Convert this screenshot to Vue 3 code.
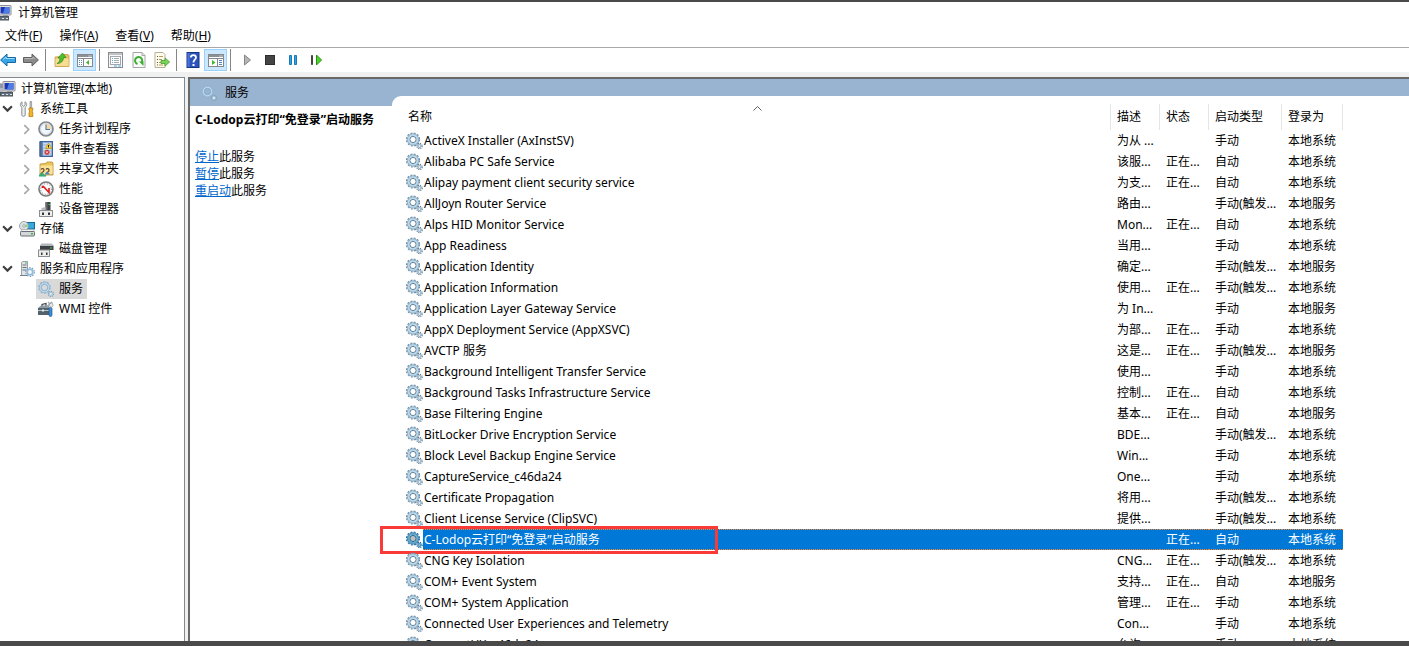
<script setup>
import { ref } from 'vue'

const selected = ref('C-Lodop云打印“免登录”启动服务')

const menus = [
  { label: '文件', key: 'F' },
  { label: '操作', key: 'A' },
  { label: '查看', key: 'V' },
  { label: '帮助', key: 'H' },
]

const toolGroups = [
  [{ icon: 'back', title: '后退' }, { icon: 'forward', title: '前进' }],
  [{ icon: 'up', title: '上一级' }, { icon: 'tree', title: '显示/隐藏控制台树', on: true }],
  [{ icon: 'props', title: '属性' }, { icon: 'refresh', title: '刷新' }, { icon: 'export', title: '导出列表' }],
  [{ icon: 'help', title: '帮助' }, { icon: 'action', title: '显示/隐藏操作窗格', on: true }],
  [{ icon: 'play', title: '启动服务' }, { icon: 'stop', title: '停止服务' }, { icon: 'pause', title: '暂停服务' }, { icon: 'restart', title: '重启动服务' }],
]

const tree = [
  { level: 0, icon: 'computer', label: '计算机管理(本地)' },
  { level: 1, icon: 'tools', label: '系统工具', caret: 'open' },
  { level: 2, icon: 'clock', label: '任务计划程序', caret: 'closed' },
  { level: 2, icon: 'events', label: '事件查看器', caret: 'closed' },
  { level: 2, icon: 'shared', label: '共享文件夹', caret: 'closed' },
  { level: 2, icon: 'perf', label: '性能', caret: 'closed' },
  { level: 2, icon: 'device', label: '设备管理器' },
  { level: 1, icon: 'storage', label: '存储', caret: 'open' },
  { level: 2, icon: 'disk', label: '磁盘管理' },
  { level: 1, icon: 'apps', label: '服务和应用程序', caret: 'open' },
  { level: 2, icon: 'gearsoft', label: '服务', active: true },
  { level: 2, icon: 'wmi', label: 'WMI 控件' },
]

const columns = ['名称', '描述', '状态', '启动类型', '登录为']

const R = '正在...'
const M = '手动'
const A = '自动'
const T = '手动(触发...'
const S = '本地系统'
const L = '本地服务'
const services = [
  ['ActiveX Installer (AxInstSV)', '为从 ...', '', M, S],
  ['Alibaba PC Safe Service', '该服...', R, A, S],
  ['Alipay payment client security service', '为支...', R, A, S],
  ['AllJoyn Router Service', '路由...', '', T, L],
  ['Alps HID Monitor Service', 'Mon...', R, A, S],
  ['App Readiness', '当用...', '', M, S],
  ['Application Identity', '确定...', '', T, L],
  ['Application Information', '使用...', R, T, S],
  ['Application Layer Gateway Service', '为 In...', '', M, L],
  ['AppX Deployment Service (AppXSVC)', '为部...', R, M, S],
  ['AVCTP 服务', '这是...', R, T, L],
  ['Background Intelligent Transfer Service', '使用...', '', M, S],
  ['Background Tasks Infrastructure Service', '控制...', R, A, S],
  ['Base Filtering Engine', '基本...', R, A, L],
  ['BitLocker Drive Encryption Service', 'BDE...', '', T, S],
  ['Block Level Backup Engine Service', 'Win...', '', M, S],
  ['CaptureService_c46da24', 'One...', '', M, S],
  ['Certificate Propagation', '将用...', '', T, S],
  ['Client License Service (ClipSVC)', '提供...', '', T, S],
  ['C-Lodop云打印“免登录”启动服务', '', R, A, S],
  ['CNG Key Isolation', 'CNG...', R, T, S],
  ['COM+ Event System', '支持...', R, A, L],
  ['COM+ System Application', '管理...', R, M, S],
  ['Connected User Experiences and Telemetry', 'Con...', '', M, S],
  ['ConsentUX_c46da24', '允许...', '', M, S],
]
</script>

<template>
  <div class="window">
    <svg class="defs" aria-hidden="true">
      <symbol id="i-computer" viewBox="0 0 16 16">
        <rect x="3" y="0.5" width="12" height="9.5" rx="0.5" fill="#e4e4dc" stroke="#8d8f96" />
        <rect x="4.5" y="2" width="9" height="6.5" fill="#1c36b4" />
        <path d="M9 2h4.500v6.500H7z" fill="#4f7be6" />
        <path d="M0 2h3v9H0z" fill="#b4b8c2" /><path d="M0 4h3M0 6h3" stroke="#6d7484" />
        <path d="M7 10h5v2H7z" fill="#989ca2" />
        <rect x="0.500" y="11.500" width="12" height="3.500" fill="#66727c" stroke="#4a555e" />
        <path d="M2 13.500h2M6 13.500h2M10 13.500h2" stroke="#dbe4ea" />
      </symbol>
      <symbol id="i-tools" viewBox="0 0 16 16">
        <path d="M3 .8v3l1.500 1.700L6 3.800v-3c2 1 2.300 4 .2 5.500V14c0 1.800-3.400 1.800-3.400 0V6.300C.8 5 1 2 3 .8z" fill="#eceef0" stroke="#7f8489" stroke-width=".9" />
        <path d="M11 0.500h1.600v6H11z" fill="#ccc" stroke="#777" stroke-width=".6" />
        <path d="M10 7h3.800v2l-.7 1 .7 2v3.500H10V12l.7-2-.7-1z" fill="#f5b529" stroke="#b87b13" stroke-width=".8" />
      </symbol>
      <symbol id="i-clock" viewBox="0 0 16 16">
        <circle cx="8" cy="8" r="7" fill="#f3f6fa" stroke="#85898d" stroke-width="1.700" />
        <path d="M8 8V3a5 5 0 0 1 5 5z" fill="#f5d79a" />
        <circle cx="8" cy="8" r="5.500" fill="none" stroke="#bcc9d8" stroke-width=".7" />
        <path d="M8 3.500v5h4" fill="none" stroke="#4a78ad" stroke-width="1.100" />
      </symbol>
      <symbol id="i-events" viewBox="0 0 16 16">
        <rect x="2" y="0.500" width="12.500" height="15" fill="#5f8bc9" stroke="#3d639a" />
        <path d="M5 1.500h8.500v13H5z" fill="#c8d8ee" /><path d="M5 4h8M5 7h8M5 10h8M5 13h8" stroke="#8da9cf" stroke-width=".7" />
        <path d="M1 2h3M1 4h3M1 6h3M1 8h3M1 10h3M1 12h3M1 14h3" stroke="#4d5a6c" stroke-width=".9" />
        <path d="M10.500 2l3 5.500h-6z" fill="#ffd62b" stroke="#b58b00" stroke-width=".6" />
        <path d="M10.500 4v2.500" stroke="#222" /><circle cx="9" cy="11.300" r="2.500" fill="#d5352f" /><path d="M8 10.300l2 2M10 10.300l-2 2" stroke="#fff" stroke-width=".8" />
      </symbol>
      <symbol id="i-shared" viewBox="0 0 16 16">
        <path d="M2 3l6-.5 1-1.500h5l1 1v12H2z" fill="#ecc65b" stroke="#b78c2f" stroke-width=".8" />
        <path d="M2.500 4.500h12V13h-12z" fill="#fae298" />
        <path d="M3 8.500c1-1.500 3-1 3 .7S4.500 11 3.500 11.700M8 8.500c1-1.500 3-1 3 .7S9.500 11 8.500 11.700" fill="none" stroke="#6a4b32" stroke-width="1.300" />
        <path d="M1.500 14c0-3 4.500-3 4.500 0z" fill="#3ea873" /><path d="M7 13.500c0-3 4.500-3 4.500 0z" fill="#438dd0" />
        <path d="M1 14.800h7" stroke="#2cab6c" stroke-width="1.500" />
      </symbol>
      <symbol id="i-perf" viewBox="0 0 16 16">
        <circle cx="8" cy="8" r="7" fill="#fcfcfc" stroke="#77797b" stroke-width="1.600" />
        <circle cx="8" cy="8" r="5.300" fill="none" stroke="#444" stroke-width=".7" stroke-dasharray="1 1.800" />
        <path d="M4.500 5v2M5 5l6 6.500V7" fill="none" stroke="#dd1c1c" stroke-width="1.600" />
      </symbol>
      <symbol id="i-device" viewBox="0 0 16 16">
        <path d="M7.500 1h5v9h-5z" fill="#3d4145" /><path d="M7.500 1h2v9h-2z" fill="#686d71" /><path d="M10.500 3.500H12" stroke="#35dc43" />
        <path d="M3.500 7l4-1v4h-4z" fill="#b7bbc0" />
        <rect x="1.500" y="9.500" width="13" height="6" fill="#ededec" stroke="#898d91" />
        <path d="M4 11.500h2v2.500H4zM10 11.500h2v2.500h-2z" fill="#34383c" />
      </symbol>
      <symbol id="i-storage" viewBox="0 0 16 16">
        <rect x="6" y="1.500" width="9.500" height="6.500" fill="#37a9dd" stroke="#146b97" />
        <circle cx="5" cy="5" r="4.500" fill="#dce2e4" stroke="#8b9497" stroke-width=".8" /><path d="M5 5l3.800-2.500v4z" fill="#8cd68f" /><circle cx="5" cy="5" r="1.300" fill="#fff" stroke="#81898d" stroke-width=".7" />
        <path d="M3 8.500h11l1.500 2H1.500z" fill="#f1f2f3" stroke="#979ca0" stroke-width=".6" />
        <rect x="1.500" y="10.500" width="14" height="4.500" rx="1" fill="#d4d7da" stroke="#6a7075" />
        <path d="M12 12.700h2" stroke="#35b93b" stroke-width="1.500" />
      </symbol>
      <symbol id="i-disk" viewBox="0 0 16 16">
        <path d="M2 4.500h13.500V9H2z" fill="#3e4245" /><path d="M3.500 2.500h10.500l1.500 2.500H2z" fill="#b3b7ba" /><path d="M12 7h2" stroke="#42d44a" stroke-width="1.200" />
        <rect x="0.500" y="9" width="11" height="6.500" fill="#ececeb" stroke="#8b8f92" /><path d="M3 11.500h1.500V14H3zM8 11.500h1.500V14H8z" fill="#34383c" />
      </symbol>
      <symbol id="i-apps" viewBox="0 0 16 16">
        <path d="M2.500 1.500l1.500-1h4.500v14h-6z" fill="#e1e5e8" stroke="#878e93" stroke-width=".8" /><path d="M3.500 4h4M3.500 6.500h4M3.500 9h4" stroke="#69737a" /><path d="M1 14.500h8" stroke="#777f85" /><path d="M6 2h2" stroke="#3cbd48" />
        <circle cx="11" cy="11" r="4.300" fill="none" stroke="#77a1c4" stroke-width="1.200" stroke-dasharray="1.500 1.200" />
        <circle cx="11" cy="11" r="2.800" fill="#f2f8fc" stroke="#94bbd8" stroke-width="1.800" />
      </symbol>
      <symbol id="i-wmi" viewBox="0 0 16 16">
        <path d="M4 5V3.500l4-1V5" fill="none" stroke="#38434b" stroke-width="1.200" />
        <path d="M0 7l3-2.500h8V7z" fill="#8b98a2" /><path d="M0 7h11v7H0z" fill="#54626c" /><path d="M0 9.500h11" stroke="#b9c5cc" />
        <path d="M4 8.500h2v2H4z" fill="#e7ecef" /><path d="M9 5.500l5-4.500M10 1l4 4" stroke="#aab1b6" stroke-width="1.600" />
        <rect x="11" y="6" width="3" height="9.500" rx="1.500" fill="#3a8dd8" stroke="#225c97" stroke-width=".7" />
        <path d="M11 3.500l3-2 1 3-2 2.500z" fill="#eceeef" stroke="#858b90" stroke-width=".7" />
      </symbol>
      <symbol id="i-gearsoft" viewBox="0 0 16 16">
        <circle cx="6.500" cy="6.500" r="5.600" fill="none" stroke="#8fb1cc" stroke-width="1.400" stroke-dasharray="2 1.520" />
        <circle cx="6.500" cy="6.500" r="4.300" fill="none" stroke="#b9d8ee" stroke-width="2.200" /><circle cx="6.500" cy="6.500" r="3.200" fill="none" stroke="#7fa6c3" stroke-width=".8" /><circle cx="6.500" cy="6.500" r="5.200" fill="none" stroke="#86abc7" stroke-width=".6" />
        <circle cx="12.900" cy="12.900" r="2.500" fill="none" stroke="#7b9fb9" stroke-width="1.200" stroke-dasharray="1.100 .86" /><circle cx="12.900" cy="12.900" r="1.500" fill="#edf5fa" stroke="#a0c1d8" />
      </symbol>
      <symbol id="i-gear" viewBox="0 0 18 18">
        <circle cx="8" cy="7.500" r="6.400" fill="none" stroke="#6f8ba0" stroke-width="1.400" stroke-dasharray="1.900 1.450" />
        <circle cx="8" cy="7.500" r="4.700" fill="none" stroke="#b9d7eb" stroke-width="2.600" />
        <circle cx="8" cy="7.500" r="5.700" fill="none" stroke="#7d9db5" stroke-width=".7" />
        <circle cx="8" cy="7.500" r="3.100" fill="#fff" stroke="#5f7f98" stroke-width="1" />
        <circle cx="14.500" cy="14" r="2.600" fill="none" stroke="#5f7c92" stroke-width="1.300" stroke-dasharray="1.150 .9" />
        <circle cx="14.500" cy="14" r="1.500" fill="#e7f1f7" stroke="#8fb2ca" stroke-width="1.200" />
      </symbol>
      <symbol id="i-back" viewBox="0 0 16 16"><path d="M0.600 8L7 2v3.500h8.500v5H7V14z" fill="#38a6e4" stroke="#1767a5" /><path d="M3 7.500L6 5v1.500h8.500" fill="none" stroke="#9bdcfb" /></symbol>
      <symbol id="i-forward" viewBox="0 0 16 16"><path d="M15.400 8L9 2v3.500H0.500v5H9V14z" fill="#8b8b8b" stroke="#5e5e5e" /><path d="M1.500 6.500H10V5l2 2" fill="none" stroke="#bababa" /></symbol>
      <symbol id="i-up" viewBox="0 0 16 16">
        <path d="M1 5l7-.5 1-2h5l1 1V14.500H1z" fill="#e8c063" stroke="#c79c45" stroke-width=".8" /><path d="M1.500 6.500h13V14h-13z" fill="#f7dc92" />
        <path d="M3 11.500c2-1 3-2.500 3-5.500H4l4.500-5L12 5.500H9.500c0 3.500-2.500 6-6.500 6z" fill="#4dc02c" stroke="#2b871a" stroke-width=".7" />
      </symbol>
      <symbol id="i-tree" viewBox="0 0 16 16">
        <rect x="0.500" y="2.500" width="15" height="12" fill="#fff" stroke="#85898d" /><path d="M1 4h14" stroke="#8b9095" stroke-width="2" /><path d="M1 6.500h14M6.500 7v7" stroke="#85898d" /><path d="M11.500 4h1M13.500 4h1" stroke="#fff" />
        <path d="M2 8.500h1M4 8.500h1M2 10.500h1M4 10.500h1M2 12.500h1M4 12.500h1" stroke="#4c8abd" /><path d="M12 8v5l-3-2.500z" fill="#42b629" />
      </symbol>
      <symbol id="i-action" viewBox="0 0 16 16">
        <rect x="0.500" y="2.500" width="15" height="12" fill="#fff" stroke="#85898d" /><path d="M1 4h14" stroke="#8b9095" stroke-width="2" /><path d="M1 6.500h14M9.500 7v7" stroke="#85898d" /><path d="M11.500 4h1M13.500 4h1" stroke="#fff" />
        <path d="M11 8.500h3M11 10.500h3M11 12.500h3" stroke="#4c8abd" /><path d="M4 8v5l3.500-2.500z" fill="#42b629" />
      </symbol>
      <symbol id="i-props" viewBox="0 0 16 16">
        <rect x="0.500" y="0.500" width="14" height="15" fill="#f8f8f8" stroke="#8a8e92" /><path d="M1 2h13" stroke="#afb3b7" stroke-width="1.500" /><rect x="2.500" y="4.500" width="10" height="8" fill="#fff" stroke="#a4a8ac" />
        <path d="M4 6.500h1M4 8.500h1M4 10.500h1" stroke="#55a9dd" /><path d="M6 6.500h5M6 8.500h5M6 10.500h5" stroke="#a3a8ac" /><path d="M6 14h3M10 14h3" stroke="#50aee4" />
      </symbol>
      <symbol id="i-refresh" viewBox="0 0 16 16">
        <path d="M2 .500h9l3 3V15.500H2z" fill="#fbfbfb" stroke="#a6a6a6" /><path d="M11 .500v3h3" fill="#e2e2e2" stroke="#a6a6a6" />
        <path d="M6.500 12a3.600 3.600 0 1 1 4.200-1.500" fill="none" stroke="#3cae31" stroke-width="2" /><path d="M8 9.500h4.500V14z" fill="#3cae31" />
      </symbol>
      <symbol id="i-export" viewBox="0 0 16 16">
        <path d="M1 .500h8l2 2V15.500H1z" fill="#fffceb" stroke="#b5b097" /><path d="M3 4.500h1M3 7.500h1M3 10.500h1M3 13h1" stroke="#555" /><path d="M5 4.500h4M5 7.500h3M5 10.500h3M5 13h4" stroke="#b49c62" />
        <path d="M7 8.500h4V6l4.700 4-4.700 4v-2.500H7z" fill="#7ad35b" stroke="#399627" stroke-width=".7" />
      </symbol>
      <symbol id="i-help" viewBox="0 0 16 16">
        <rect x="2" y="0.500" width="12" height="15" fill="#2c55bd" stroke="#173681" /><path d="M2.500 1h2v14h-2z" fill="#4c76d5" />
        <path d="M5.800 5.500c0-3.300 5.200-3.300 5.200 0 0 2-2.600 2.500-2.600 5" fill="none" stroke="#fff" stroke-width="1.700" /><path d="M7.500 12h2v2h-2z" fill="#fff" />
      </symbol>
      <symbol id="i-play" viewBox="0 0 16 16"><path d="M5.500 3v10l6-5z" fill="#b5b5b5" stroke="#858585" /></symbol>
      <symbol id="i-stop" viewBox="0 0 16 16"><rect x="3.500" y="3.500" width="9" height="9" fill="#444" stroke="#2e2e2e" /></symbol>
      <symbol id="i-pause" viewBox="0 0 16 16"><path d="M4.500 3.500h2v9h-2zM9.500 3.500h2v9h-2z" fill="#30a5e6" stroke="#1679b9" /></symbol>
      <symbol id="i-restart" viewBox="0 0 16 16"><path d="M3.500 3.500h1v9h-1z" fill="#555" stroke="#444" /><path d="M8.500 3v10l5-5z" fill="#4bd42c" stroke="#279313" /></symbol>
    </svg>

    <header class="titlebar">
      <svg class="icon"><use href="#i-computer" /></svg>
      <span>计算机管理</span>
    </header>

    <nav class="menubar">
      <button v-for="m in menus" :key="m.key" type="button">{{ m.label }}(<u>{{ m.key }}</u>)</button>
    </nav>

    <div class="toolbar">
      <div v-for="(group, g) in toolGroups" :key="g" class="group">
        <button v-for="t in group" :key="t.icon" type="button" :class="{ on: t.on }" :aria-label="t.title">
          <svg class="icon"><use :href="'#i-' + t.icon" /></svg>
        </button>
      </div>
    </div>

    <main class="panes">
      <ul class="tree">
        <li v-for="n in tree" :key="n.label" :class="'level' + n.level">
          <button v-if="n.level" type="button" class="caret" :class="n.caret" :disabled="!n.caret" :aria-label="n.label">
            <svg v-if="n.caret === 'open'" viewBox="0 0 10 10"><path d="M1 2l4 4 4-4" /></svg>
            <svg v-else-if="n.caret" viewBox="0 0 10 10"><path d="M3 1l4 4-4 4" /></svg>
          </button>
          <a href="#" class="node" :class="{ active: n.active }">
            <svg class="icon"><use :href="'#i-' + n.icon" /></svg>
            <span>{{ n.label }}</span>
          </a>
        </li>
      </ul>

      <section class="result">
        <aside class="info">
          <h2><svg class="icon"><use href="#i-gearsoft" /></svg>服务</h2>
          <div class="details">
            <h3>{{ selected }}</h3>
            <p><a href="#">停止</a>此服务</p>
            <p><a href="#">暂停</a>此服务</p>
            <p><a href="#">重启动</a>此服务</p>
          </div>
        </aside>

        <div class="list">
          <table>
            <colgroup>
              <col /><col class="c-desc" /><col class="c-state" /><col class="c-type" /><col class="c-logon" />
            </colgroup>
            <thead>
              <tr>
                <th v-for="(c, i) in columns" :key="c" scope="col">
                  <svg v-if="i === 0" class="sort" viewBox="0 0 9 5"><path d="M.5 4.500l4-4 4 4" /></svg>
                  <span>{{ c }}</span>
                </th>
              </tr>
            </thead>
            <tbody>
              <tr v-for="s in services" :key="s[0]" :class="{ selected: s[0] === selected }" @click="selected = s[0]">
                <td class="name">
                  <div class="cell">
                    <svg class="gear"><use href="#i-gear" /></svg>
                    <span class="label">{{ s[0] }}</span>
                  </div>
                  <div v-if="s[0] === selected" class="marker"></div>
                </td>
                <td v-for="i in 4" :key="i">{{ s[i] }}</td>
              </tr>
            </tbody>
          </table>
        </div>
      </section>
    </main>
  </div>
</template>

<style>
body {
  margin: 0;
}
</style>

<style scoped>
.window {
  display: flex;
  flex-direction: column;
  box-sizing: border-box;
  height: 100vh;
  overflow: hidden;
  border-top: 2px solid #4a4a4a;
  border-bottom: 5px solid #4a4a4a;
  background: #fff;
  color: #000;
  font: 12px/20px "Noto Sans", "Noto Sans CJK SC", sans-serif;
}
.defs {
  position: absolute;
  width: 0;
  height: 0;
}
button {
  padding: 0;
  border: 0;
  background: none;
  color: inherit;
  font: inherit;
}
.icon {
  flex: none;
  width: 16px;
  height: 16px;
}
.titlebar {
  display: flex;
  flex: none;
  align-items: center;
  gap: 6px;
  height: 22px;
  margin-left: -4px;
}
.menubar {
  display: flex;
  flex: none;
  align-items: center;
  gap: 17px;
  height: 23px;
  padding-left: 5px;
  border-bottom: 1px solid #a8a8a8;
}
.toolbar {
  display: flex;
  flex: none;
  align-items: center;
  height: 24px;
  margin-left: -4px;
}
.group {
  display: flex;
}
.group + .group::before {
  width: 1px;
  margin: 0 4px 0 3px;
  background: #868686;
  content: "";
}
.group button {
  display: flex;
  box-sizing: border-box;
  align-items: center;
  justify-content: center;
  width: 23px;
  height: 22px;
}
.group .on {
  border: 1px solid #99d1ff;
  background: #cce8ff;
}
.panes {
  display: grid;
  flex: 1;
  grid-template-columns: 185px 1fr;
  gap: 3px;
  min-height: 0;
  padding-top: 5px;
  background: #f0f0f0;
}
.tree {
  margin: 0;
  padding: 1px 0 0;
  border: 1px solid #828790;
  border-width: 1px 1px 0 0;
  background: #fff;
  list-style: none;
}
.tree li {
  display: flex;
  align-items: center;
  height: 20px;
}
.level1 {
  padding-left: 2px;
}
.level2 {
  padding-left: 21px;
}
.caret {
  display: flex;
  flex: none;
  align-items: center;
  width: 15px;
}
.caret svg {
  width: 11px;
  height: 11px;
  fill: none;
  stroke: #404040;
  stroke-width: 2;
}
.caret.closed svg {
  stroke: #a6a6a6;
  stroke-width: 1.5;
}
.node {
  display: flex;
  align-items: center;
  gap: 5px;
  padding: 0 4px 0 2px;
  color: inherit;
  text-decoration: none;
  white-space: nowrap;
}
.level0 .node {
  padding-left: 0;
}
.active {
  background: #d9d9d9;
}
.result {
  display: grid;
  grid-template-columns: 202px 1fr;
  min-width: 0;
  overflow: hidden;
  border: 2px solid #696969;
  border-width: 2px 0 0 2px;
  background: #99b4d1;
}
.info {
  display: flex;
  flex-direction: column;
}
h2,
h3,
p {
  margin: 0;
  font-size: 12px;
}
h2 {
  display: flex;
  align-items: center;
  gap: 8px;
  box-sizing: border-box;
  height: 27px;
  padding: 1px 0 0 11px;
  font-weight: 400;
}
.details {
  flex: 1;
  padding: 5px;
  background: #fff;
  line-height: 17px;
  white-space: nowrap;
}
h3 {
  margin-bottom: 20px;
}
.details a {
  color: #0066cc;
}
.list {
  min-width: 0;
  margin-top: 17px;
  padding: 8px 66px 0 10px;
  border-top-left-radius: 9px;
  background: #fff;
}
table {
  width: 100%;
  border-collapse: collapse;
  table-layout: fixed;
}
.c-desc,
.c-state {
  width: 49px;
}
.c-type {
  width: 73px;
}
.c-logon {
  width: 61px;
}
th,
td {
  height: 21px;
  padding: 0 0 0 6px;
  line-height: 21px;
  text-align: left;
  white-space: nowrap;
}
th {
  position: relative;
  height: 26px;
  font-weight: 400;
}
.sort {
  position: absolute;
  top: 2px;
  left: 50%;
  width: 9px;
  height: 5px;
  margin-left: -4px;
  fill: none;
  stroke: #606060;
}
th span {
  display: block;
  margin-left: -7px;
  padding-left: 6px;
  border-left: 1px solid #e5e5e5;
  line-height: 26px;
}
th:first-child span {
  margin-left: 0;
  padding-left: 0;
  border: 0;
}
th:last-child span {
  border-right: 1px solid #e5e5e5;
}
.name {
  position: relative;
  padding-left: 3px;
}
.cell {
  display: flex;
  align-items: center;
}
.gear {
  flex: none;
  width: 18px;
  height: 18px;
}
.label {
  flex: 1;
  padding-left: 1px;
}
.selected td {
  background: #0078d7;
  color: #fff;
}
.selected td:not(.name),
.selected .label {
  background:
    repeating-linear-gradient(90deg, #ff8728 0 1px, #0078d7 1px 2px) top / 100% 1px no-repeat,
    repeating-linear-gradient(90deg, #ff8728 0 1px, #0078d7 1px 2px) bottom / 100% 1px no-repeat,
    #0078d7;
}
.selected .name {
  background: #fff;
}
.selected .gear {
  filter: saturate(3) brightness(0.75);
}
.marker {
  position: absolute;
  top: -3px;
  left: -22px;
  box-sizing: border-box;
  width: 338px;
  height: 28px;
  border: 3px solid #f93a37;
}
</style>
